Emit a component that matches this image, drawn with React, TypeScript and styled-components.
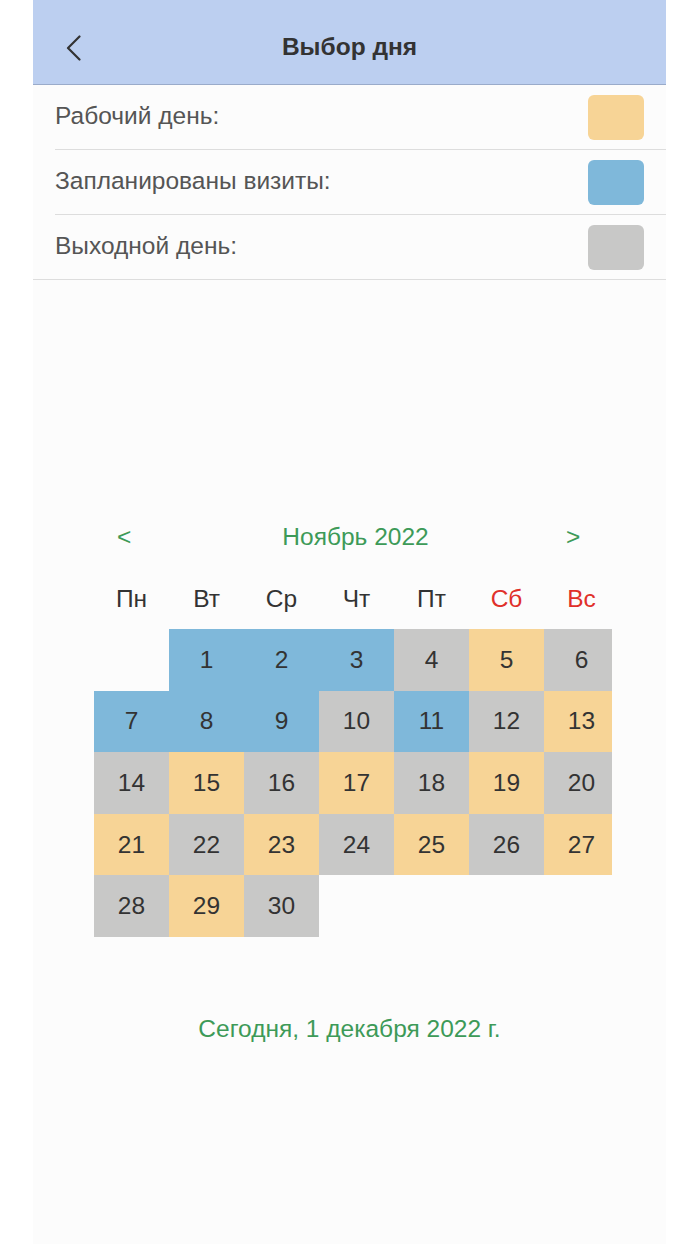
import React from "react";
import styled, { createGlobalStyle } from "styled-components";

const Global = createGlobalStyle`
  html, body { margin: 0; padding: 0; background: #ffffff; }
  body { font-family: "Liberation Sans", Arial, sans-serif; }
`;

const Page = styled.div`
  width: 700px;
  height: 1244px;
  display: flex;
  justify-content: flex-start;
  padding-left: 33px;
  box-sizing: border-box;
`;

const Panel = styled.div`
  width: 633px;
  height: 1244px;
  background: #fcfcfc;
  display: flex;
  flex-direction: column;
`;

const Header = styled.header`
  height: 85px;
  flex-shrink: 0;
  background: #bccff0;
  border-bottom: 1px solid #9aabca;
  display: flex;
  align-items: center;
  justify-content: center;
  position: relative;
  box-sizing: border-box;
  padding-top: 10px;
`;

const BackButton = styled.button`
  position: absolute;
  left: 26px;
  top: 30px;
  width: 30px;
  height: 36px;
  border: none;
  background: none;
  padding: 0;
  display: flex;
  align-items: center;
  justify-content: center;
`;

const Title = styled.h1`
  margin: 0;
  font-size: 24.5px;
  font-weight: 700;
  color: #333333;
`;

const LegendRow = styled.div<{ $full?: boolean }>`
  height: 65px;
  flex-shrink: 0;
  display: flex;
  align-items: center;
  justify-content: space-between;
  margin-left: ${(p) => (p.$full ? "0" : "22px")};
  padding-left: ${(p) => (p.$full ? "22px" : "0")};
  padding-right: 22px;
  border-bottom: 1px solid #dddddd;
  box-sizing: border-box;
  padding-bottom: 2px;
`;

const LegendLabel = styled.span`
  font-size: 24.5px;
  color: #555555;
`;

const Swatch = styled.div<{ $color: string }>`
  width: 56px;
  height: 45px;
  border-radius: 6px;
  background: ${(p) => p.$color};
  margin-top: 2px;
`;

const Calendar = styled.section`
  margin-top: 238px;
  margin-left: 61px;
  width: 525px;
  display: flex;
  flex-direction: column;
`;

const Nav = styled.div`
  display: flex;
  align-items: center;
  justify-content: space-between;
  height: 38px;
  padding-left: 23px;
  padding-right: 39px;
  color: #3d9a58;
  font-size: 24.5px;
`;

const NavArrow = styled.span`
  width: 14px;
  text-align: center;
`;

const MonthTitle = styled.span`
  margin-left: 14px;
`;

const Weekdays = styled.div`
  display: grid;
  grid-template-columns: repeat(7, 75px);
  margin-top: 24px;
  height: 38px;
  align-items: center;
`;

const Weekday = styled.div<{ $weekend?: boolean }>`
  text-align: center;
  font-size: 24.5px;
  color: ${(p) => (p.$weekend ? "#e0302a" : "#333333")};
`;

const DaysClip = styled.div`
  width: 518px;
  overflow: hidden;
  margin-top: 11px;
`;

const Days = styled.div`
  display: grid;
  grid-template-columns: repeat(7, 75px);
  grid-auto-rows: 61.6px;
  width: 525px;
`;

const Day = styled.div<{ $kind: Kind }>`
  display: flex;
  align-items: center;
  justify-content: center;
  font-size: 24.5px;
  color: #333333;
  background: ${(p) =>
    p.$kind === "v" ? "#7fb8da" : p.$kind === "w" ? "#f7d496" : p.$kind === "o" ? "#c8c8c7" : "transparent"};
`;

const Today = styled.div`
  margin-top: 78px;
  text-align: center;
  font-size: 24.5px;
  color: #3d9a58;
`;

type Kind = "v" | "w" | "o" | "e";

const kinds: Kind[] = [
  "e", "v", "v", "v", "o", "w", "o",
  "v", "v", "v", "o", "v", "o", "w",
  "o", "w", "o", "w", "o", "w", "o",
  "w", "o", "w", "o", "w", "o", "w",
  "o", "w", "o",
];

const weekdays = ["Пн", "Вт", "Ср", "Чт", "Пт", "Сб", "Вс"];

export default function App() {
  let dayNum = 0;
  return (
    <>
      <Global />
      <Page>
        <Panel>
          <Header>
            <BackButton aria-label="Назад">
              <svg width="16" height="26" viewBox="0 0 16 26" fill="none">
                <path d="M13.5 1.5 L2 13 L13.5 24.5" stroke="#333" strokeWidth="2.2" strokeLinecap="round" strokeLinejoin="round" />
              </svg>
            </BackButton>
            <Title>Выбор дня</Title>
          </Header>
          <LegendRow>
            <LegendLabel>Рабочий день:</LegendLabel>
            <Swatch $color="#f7d496" />
          </LegendRow>
          <LegendRow>
            <LegendLabel>Запланированы визиты:</LegendLabel>
            <Swatch $color="#7fb8da" />
          </LegendRow>
          <LegendRow $full>
            <LegendLabel>Выходной день:</LegendLabel>
            <Swatch $color="#c8c8c7" />
          </LegendRow>
          <Calendar>
            <Nav>
              <NavArrow>&lt;</NavArrow>
              <MonthTitle>Ноябрь 2022</MonthTitle>
              <NavArrow>&gt;</NavArrow>
            </Nav>
            <Weekdays>
              {weekdays.map((w, i) => (
                <Weekday key={w} $weekend={i >= 5}>{w}</Weekday>
              ))}
            </Weekdays>
            <DaysClip>
              <Days>
                {kinds.map((k, i) => {
                  if (k !== "e") dayNum += 1;
                  return (
                    <Day key={i} $kind={k}>{k === "e" ? "" : dayNum}</Day>
                  );
                })}
              </Days>
            </DaysClip>
          </Calendar>
          <Today>Сегодня, 1 декабря 2022 г.</Today>
        </Panel>
      </Page>
    </>
  );
}
